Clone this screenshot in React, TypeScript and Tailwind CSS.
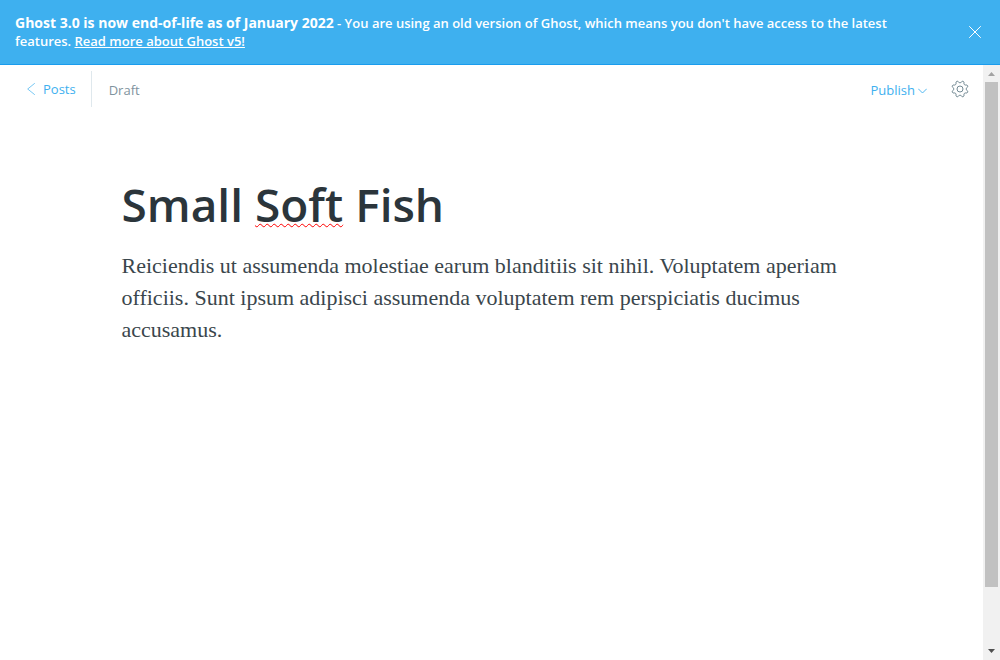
import React from "react";

function CloseIcon() {
  return (
    <svg width="12" height="12" viewBox="0 0 12 12" fill="none" stroke="currentColor" strokeLinecap="round" aria-hidden="true">
      <path d="M.5.5l11 11M11.5.5l-11 11" />
    </svg>
  );
}

function BackIcon() {
  return (
    <svg width="8" height="12" viewBox="0 0 8 12" fill="none" stroke="currentColor" strokeWidth="0.7" strokeLinecap="round" strokeLinejoin="round" aria-hidden="true">
      <path d="M7.5.5L.7 6l6.8 5.5" />
    </svg>
  );
}

function ChevronIcon() {
  return (
    <svg width="9" height="6" viewBox="0 0 9 6" fill="none" stroke="currentColor" strokeWidth="0.9" strokeLinecap="round" strokeLinejoin="round" aria-hidden="true">
      <path d="M.5 1l4 4 4-4" />
    </svg>
  );
}

const TEETH = 8;

function gearPath(center: number, outer: number, inner: number) {
  const at = (radius: number, turn: number) => {
    const angle = turn * Math.PI * 2;
    return `${(center + radius * Math.sin(angle)).toFixed(2)} ${(center - radius * Math.cos(angle)).toFixed(2)}`;
  };
  let d = `M${at(inner, 0)}`;
  for (let i = 0; i < TEETH; i++) {
    const t = (f: number) => (i + f) / TEETH;
    d += `Q${at(inner, t(0.2))} ${at((inner + outer) / 2, t(0.25))}`;
    d += `Q${at(outer, t(0.3))} ${at(outer, t(0.5))}`;
    d += `Q${at(outer, t(0.7))} ${at((inner + outer) / 2, t(0.75))}`;
    d += `Q${at(inner, t(0.8))} ${at(inner, t(1))}`;
  }
  return d + "Z";
}

function GearIcon() {
  return (
    <svg width="18" height="18" viewBox="0 0 18 18" fill="none" stroke="currentColor" strokeLinejoin="round" aria-hidden="true">
      <path d={gearPath(9, 8.3, 6.2)} />
      <circle cx="9" cy="9" r="3" />
    </svg>
  );
}

function Banner() {
  return (
    <aside className="flex items-center justify-between border-b border-[#1a9ced] bg-[#3eb0ef] py-3.5 pr-4 pl-[15px] text-white">
      <p className="max-w-[896px] text-[13px] leading-[18px] font-semibold">
        <b className="text-[14px] font-bold">Ghost 3.0 is now end-of-life as of January 2022</b> - You are using an old
        version of Ghost, which means you don't have access to the latest
        <br />
        features.{" "}
        <a href="#upgrade" className="underline">Read more about Ghost v5!</a>
      </p>
      <button type="button" aria-label="Dismiss" className="p-[3px]">
        <CloseIcon />
      </button>
    </aside>
  );
}

function Toolbar() {
  return (
    <header className="flex items-center justify-between pt-1.5 pr-3.5 pl-[27px] text-[13px]">
      <div className="flex h-9 items-center">
        <a href="#posts" className="flex h-full items-center gap-2 border-r border-[#dfe8ed] pr-[15px] text-[#3eb0ef]">
          <BackIcon />
          <span className="pt-0.5">Posts</span>
        </a>
        <span className="pt-1 pl-[17px] text-[#7f939e]">Draft</span>
      </div>
      <div className="flex items-center gap-6">
        <button type="button" className="flex items-center gap-[3px] pt-1 text-[#3eb0ef]">
          Publish
          <ChevronIcon />
        </button>
        <button type="button" aria-label="Settings" className="text-[#738a94]">
          <GearIcon />
        </button>
      </div>
    </header>
  );
}

function Scrollbar() {
  return (
    <div className="flex w-[17px] shrink-0 flex-col items-center bg-[#f1f1f1]" aria-hidden="true">
      <svg width="17" height="17" viewBox="0 0 17 17" fill="#a3a3a3">
        <path d="M5 11h7L8.5 7z" />
      </svg>
      <div className="w-[13px] grow-9 basis-0 bg-[#c1c1c1]" />
      <div className="grow basis-0" />
      <svg width="17" height="17" viewBox="0 0 17 17" fill="#505050">
        <path d="M5 6h7l-3.5 4z" />
      </svg>
    </div>
  );
}

export default function App() {
  return (
    <div className="flex min-h-screen flex-col bg-white font-['Open_Sans','Noto_Sans',sans-serif]">
      <Banner />
      <div className="flex grow">
        <div className="min-w-0 grow">
          <Toolbar />
          <main className="mx-auto max-w-[740px] pt-[66px]">
            <h1 className="text-[46px] leading-[62px] font-semibold text-[#2b353b]">
              Small{" "}
              <span className="underline decoration-[#ff0000] decoration-wavy decoration-1 underline-offset-1">Soft</span>{" "}
              Fish
            </h1>
            <p className="mt-[15px] font-['Liberation_Serif',serif] text-[22px] leading-8 text-[#3a464c]">
              Reiciendis ut assumenda molestiae earum blanditiis sit nihil. Voluptatem aperiam officiis. Sunt ipsum
              adipisci assumenda voluptatem rem perspiciatis ducimus accusamus.
            </p>
          </main>
        </div>
        <Scrollbar />
      </div>
    </div>
  );
}
